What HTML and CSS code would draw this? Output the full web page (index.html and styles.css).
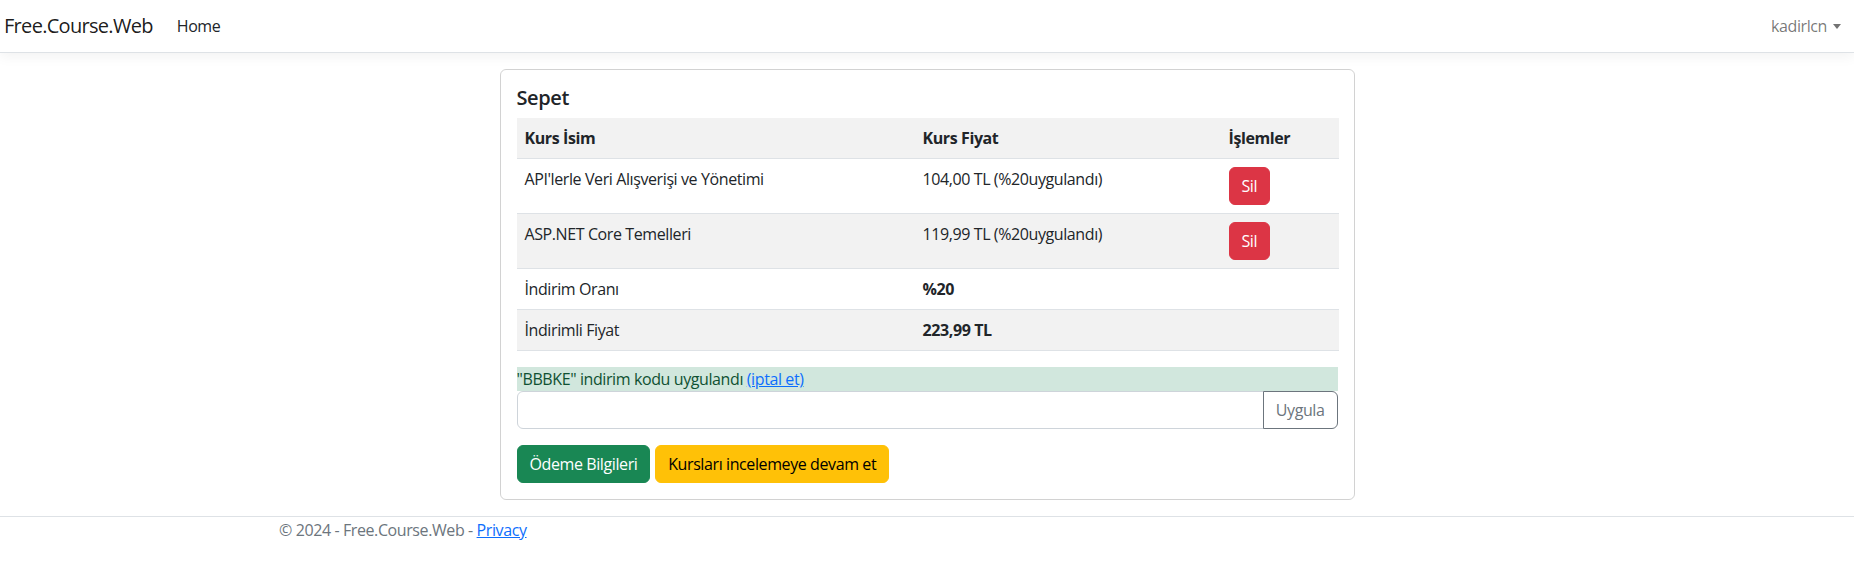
FILE: index.html
```html
<!DOCTYPE html>
<html lang="tr">
<head>
<meta charset="utf-8">
<title>Sepet - Free.Course.Web</title>
<link rel="stylesheet" href="styles.css">
</head>
<body>
<header class="navbar">
  <a class="brand" href="#">Free.Course.Web</a>
  <a class="nav-link nav-home" href="#">Home</a>
  <a class="nav-link nav-user" href="#">kadirlcn<span class="caret"></span></a>
</header>

<main class="main">
  <div class="card">
    <div class="card-body">
      <h5 class="card-title">Sepet</h5>
      <table class="basket">
        <colgroup>
          <col class="c1"><col class="c2"><col class="c3">
        </colgroup>
        <tr class="stripe">
          <th>Kurs İsim</th>
          <th>Kurs Fiyat</th>
          <th>İşlemler</th>
        </tr>
        <tr>
          <td>API'lerle Veri Alışverişi ve Yönetimi</td>
          <td>104,00 TL (%20uygulandı)</td>
          <td><a class="btn btn-danger" href="#">Sil</a></td>
        </tr>
        <tr class="stripe">
          <td>ASP.NET Core Temelleri</td>
          <td>119,99 TL (%20uygulandı)</td>
          <td><a class="btn btn-danger" href="#">Sil</a></td>
        </tr>
        <tr>
          <td>İndirim Oranı</td>
          <th>%20</th>
          <td></td>
        </tr>
        <tr class="stripe">
          <td>İndirimli Fiyat</td>
          <th>223,99 TL</th>
          <td></td>
        </tr>
      </table>

      <div class="applied">"BBBKE" indirim kodu uygulandı <a href="#">(iptal et)</a></div>
      <form class="input-group">
        <input class="form-control" type="text">
        <button class="btn btn-outline" type="button">Uygula</button>
      </form>

      <div class="actions">
        <a class="btn btn-success" href="#">Ödeme Bilgileri</a>
        <a class="btn btn-warning" href="#">Kursları incelemeye devam et</a>
      </div>
    </div>
  </div>
</main>

<footer class="footer">
  <div class="footer-inner">© 2024 - Free.Course.Web - <a href="#">Privacy</a></div>
</footer>
</body>
</html>
```

FILE: styles.css
```css
* { box-sizing: border-box; }

body {
  margin: 0;
  font-family: "Open Sans", "Noto Sans", sans-serif;
  font-size: 16px;
  line-height: 1.5;
  letter-spacing: -0.025em;
  color: #212529;
  background: #fff;
}

a { color: #0d6efd; }

.navbar {
  display: flex;
  align-items: center;
  height: 53px;
  padding: 0 13px 0 4px;
  border-bottom: 1px solid #dee2e6;
  box-shadow: 0 .25rem .75rem rgba(0,0,0,.05);
}

.brand {
  font-size: 20px;
  letter-spacing: -0.035em;
  color: rgba(0,0,0,.9);
  text-decoration: none;
  margin-right: 16px;
  padding: 5px 0;
}

.nav-link {
  padding: 8px;
  text-decoration: none;
  font-size: 16px;
}

.nav-home { color: #212529; }

.nav-user {
  margin-left: auto;
  color: rgba(0,0,0,.55);
  padding-right: 0;
}

.caret {
  display: inline-block;
  margin-left: 6px;
  vertical-align: 3px;
  border-top: 5px solid;
  border-left: 4px solid transparent;
  border-right: 4px solid transparent;
}

.main {
  padding-top: 16px;
}

.card {
  width: 855px;
  margin: 0 auto;
  border: 1px solid rgba(0,0,0,.175);
  border-radius: 6px;
}

.card-body {
  padding: 16px;
}

.card-title {
  margin: 0 0 8px;
  font-size: 20px;
  font-weight: 600;
  line-height: 1.2;
}

.basket {
  width: 100%;
  table-layout: fixed;
  border-collapse: collapse;
  margin-bottom: 16px;
}

.c1 { width: 398px; }
.c2 { width: 306px; }
.c3 { width: 118px; }

.basket th,
.basket td {
  padding: 8px;
  text-align: left;
  vertical-align: top;
  border-bottom: 1px solid #dee2e6;
}

.basket th { font-weight: 700; }

.stripe { background: #f2f2f2; }

.btn {
  display: inline-block;
  padding: 6px 12px;
  font-family: inherit;
  font-size: 16px;
  letter-spacing: inherit;
  line-height: 24px;
  border: 1px solid transparent;
  border-radius: 6px;
  text-decoration: none;
  vertical-align: middle;
  cursor: pointer;
}

.btn-danger { background: #dc3545; border-color: #dc3545; color: #fff; }
.btn-success { background: #198754; border-color: #198754; color: #fff; }
.btn-warning { background: #ffc107; border-color: #ffc107; color: #000; }

.btn-outline {
  background: #fff;
  color: #6c757d;
  border-color: #6c757d;
  border-radius: 0 6px 6px 0;
  margin-left: -1px;
}

.applied {
  background: #d1e7dd;
  color: #0f5132;
  line-height: 24px;
}

.input-group {
  display: flex;
  margin: 0 0 16px;
}

.form-control {
  flex: 1;
  height: 38px;
  padding: 6px 12px;
  font-family: inherit;
  font-size: 16px;
  border: 1px solid #ced4da;
  border-radius: 6px 0 0 6px;
}

.actions .btn { margin-right: 1px; }

.footer {
  margin-top: 16px;
  border-top: 1px solid #dee2e6;
  color: #6c757d;
}

.footer-inner {
  width: 1320px;
  margin: 0 auto;
  padding: 0 12px;
  line-height: 26px;
}
```
